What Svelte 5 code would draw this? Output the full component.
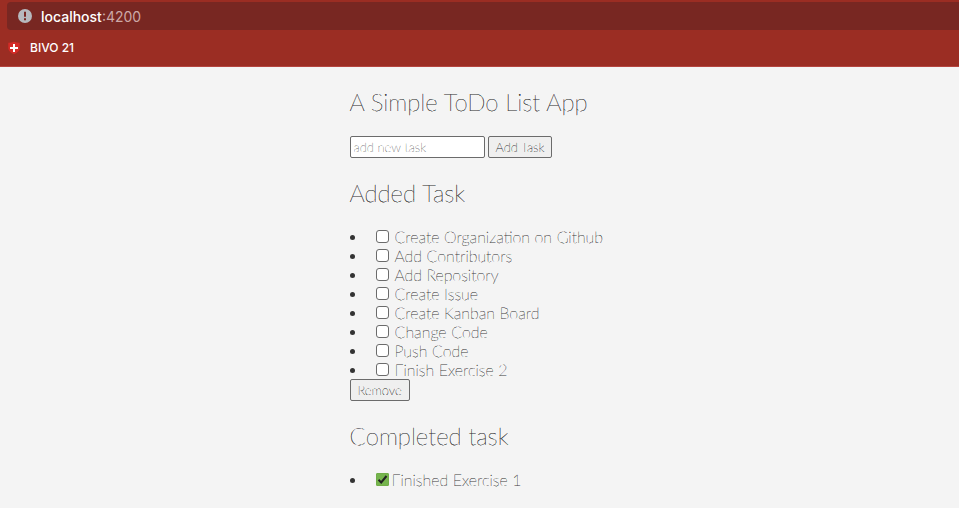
<script>
  let draft = $state('');
  let open = $state(
    [
      'Create Organization on Github',
      'Add Contributors',
      'Add Repository',
      'Create Issue',
      'Create Kanban Board',
      'Change Code',
      'Push Code',
      'Finish Exercise 2'
    ].map((name) => ({ name, done: false }))
  );
  let completed = $state([{ name: 'Finished Exercise 1', done: true }]);

  function addTask(event) {
    event.preventDefault();
    const name = draft.trim();
    if (!name) return;
    open.push({ name, done: false });
    draft = '';
  }

  function removeTasks() {
    open = open.filter((task) => !task.done);
  }
</script>

<header>
  <div class="address">
    <svg width="14" height="14" viewBox="0 0 14 14" aria-hidden="true">
      <circle cx="7" cy="7" r="7" fill="#b7b9be" />
      <path d="M6 2.8h2v5H6zM6 9.2h2v2H6z" fill="#782722" />
    </svg>
    <span class="url"><b>localhost</b>:4200</span>
  </div>
  <nav>
    <a href="#bivo">
      <svg width="14" height="14" viewBox="0 0 14 14" aria-hidden="true">
        <path d="M1.300 1.700Q4.500 1.800 7 0.700Q9.500 1.800 12.700 1.700V7Q12.500 11 7 13.300Q1.500 11 1.300 7Z" fill="#d52b27" />
        <path d="M6 3h2v3h3v2H8v3H6V8H3V6h3z" fill="#fff" />
      </svg>
      <span>BIVO 21</span>
    </a>
  </nav>
</header>

<main>
  <h2>A Simple ToDo List App</h2>
  <form onsubmit={addTask}>
    <input class="entry" type="text" placeholder="add new task" aria-label="New task" bind:value={draft} />
    <button type="submit">Add Task</button>
  </form>

  <h2>Added Task</h2>
  <ul>
    {#each open as task}
      <li>
        <label><input type="checkbox" bind:checked={task.done} /><span>{task.name}</span></label>
      </li>
    {/each}
  </ul>
  <button type="button" onclick={removeTasks}>Remove</button>

  <h2>Completed task</h2>
  <ul class="completed">
    {#each completed as task}
      <li>
        <label><input type="checkbox" bind:checked={task.done} /><span>{task.name}</span></label>
      </li>
    {/each}
  </ul>
</main>

<style>
  :global(body) {
    margin: 0;
    background: #f4f4f4;
    color: #333;
    font-family: Lato, sans-serif;
  }

  header {
    box-sizing: border-box;
    padding: 2px 0 10px 7px;
    background: #9b2d23;
    border-bottom: 1px solid #b5453f;
    color: #fff;
    font-family: Inter, sans-serif;
  }

  .address {
    display: flex;
    align-items: center;
    gap: 9px;
    height: 28px;
    padding-left: 11px;
    border-radius: 4px 0 0 4px;
    background: #782722;
    font-size: 14px;
  }

  .url {
    color: #cda9a7;
  }

  b {
    color: #fff;
    font-weight: 500;
  }

  nav {
    display: flex;
    padding-top: 9px;
  }

  a {
    display: flex;
    align-items: center;
    gap: 9px;
    color: #fff;
    font-size: 12px;
    font-weight: 500;
    line-height: 17px;
    text-decoration: none;
  }

  main {
    width: 260px;
    margin: 0 auto;
    padding: 0 0 16px;
    font-size: 16px;
    font-weight: 100;
    line-height: 19px;
    text-rendering: geometricPrecision;
    text-shadow: 0 0 0 currentColor, 0 0 0 currentColor;
  }

  h2 {
    margin: 20px 0 19px;
    padding-top: 1px;
    font-size: 24px;
    font-weight: 100;
    line-height: 29px;
  }

  form {
    display: flex;
    gap: 3px;
  }

  .entry,
  button {
    box-sizing: border-box;
    height: 22px;
    margin: 0;
    border: 1px solid #6b6b6b;
    border-radius: 2px;
    color: #333;
    font-family: Lato, sans-serif;
    font-size: 13px;
    font-weight: 100;
    line-height: 18px;
    text-rendering: inherit;
    text-shadow: inherit;
  }

  .entry {
    width: 135px;
    padding: 1px 3px;
    background: #fff;
  }

  .entry::placeholder {
    color: #757575;
  }

  button {
    display: block;
    padding: 1px 7px;
    background: #efefef;
  }

  ul {
    margin: 0;
    padding: 0;
    list-style: none;
  }

  li {
    display: flex;
    align-items: center;
    height: 19px;
    white-space: nowrap;
  }

  li::before {
    content: '';
    width: 5px;
    height: 5px;
    margin: 2px 21px 0 0;
    border-radius: 50%;
    background: #333;
  }

  label {
    display: flex;
    align-items: center;
    gap: 6px;
    color: #444;
  }

  label span {
    padding-top: 2px;
  }

  .completed label {
    gap: 3px;
  }

  input[type='checkbox'] {
    appearance: none;
    box-sizing: border-box;
    width: 13px;
    height: 13px;
    margin: 0;
    border: 1px solid #6b6b6b;
    border-radius: 3px;
    background: #fff;
  }

  input[type='checkbox']:checked {
    border-color: #70ad47;
    border-radius: 1px;
    background: #75b44d url("data:image/svg+xml,%3Csvg xmlns='http://www.w3.org/2000/svg' viewBox='0 0 11 11'%3E%3Cpath d='M1.500 5.800L4.200 8.500L9.500 2' fill='none' stroke='%23222' stroke-width='2'/%3E%3C/svg%3E") center / 11px 11px no-repeat;
  }
</style>
